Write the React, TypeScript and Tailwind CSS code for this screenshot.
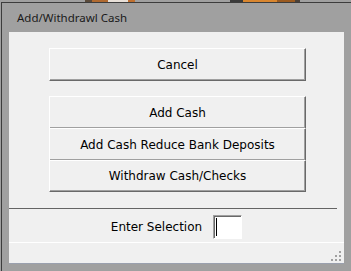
import React from 'react'

const strip = [
  { w: 85, c: '#a0a0a0' },
  { w: 7, c: '#5a4a3a' },
  { w: 16, c: '#b06a30' },
  { w: 20, c: '#e8e0d8' },
  { w: 7, c: '#c07030' },
  { w: 95, c: '#a0a0a0' },
  { w: 13, c: '#3a3a3a' },
  { w: 34, c: '#d9862f' },
  { w: 18, c: '#9a5a20' },
  { w: 5, c: '#4a4038' },
  { w: 51, c: '#a0a0a0' },
]

function OptionButton({ label, last }: { label: string; last?: boolean }) {
  return (
    <button
      className={`h-[32px] w-full bg-[#f0f0f0] border-t border-l border-white border-r border-r-[#696969] shadow-[inset_-1px_-1px_0_#a0a0a0] text-[12px] text-black ${
        last ? 'border-b border-b-[#696969]' : ''
      }`}
    >
      {label}
    </button>
  )
}

export default function App() {
  return (
    <div
      className="w-[351px] h-[271px] bg-[#a0a0a0] overflow-hidden flex flex-col"
      style={{ fontFamily: '"DejaVu Sans", sans-serif' }}
    >
      {/* desktop peeking through above the window */}
      <div className="flex h-[2px] shrink-0">
        {strip.map((s, i) => (
          <div key={i} style={{ width: s.w, background: s.c }} />
        ))}
      </div>

      <div className="flex-1 ml-[1px] border-l border-t border-[#3c3c3c] flex flex-col">
        {/* title bar */}
        <div
          className="h-[29px] pl-[15px] flex items-center text-[11.5px] text-[#1a1a1a]"
          style={{ fontFamily: '"Noto Sans", sans-serif' }}
        >
          Add/Withdrawl Cash
        </div>

        {/* client area */}
        <div className="ml-[7px] w-[335px] h-[232px] bg-[#f0f0f0] border-b border-[#9aa0ae] flex flex-col relative">
          <div className="pl-[40px] pt-[16px]">
            <button className="w-[257px] h-[33px] bg-[#f0f0f0] border-t border-l border-white border-r border-b border-r-[#696969] border-b-[#696969] shadow-[inset_-1px_-1px_0_#a0a0a0] text-[12px] text-black">
              Cancel
            </button>
          </div>

          <div className="pl-[40px] pt-[15px] flex flex-col w-[297px]">
            <OptionButton label="Add Cash" />
            <OptionButton label="Add Cash Reduce Bank Deposits" />
            <OptionButton label="Withdraw Cash/Checks" last />
          </div>

          <div className="mt-[16px] w-[328px] h-px bg-[#646464]" />

          <div className="h-[33px] pt-[6px] pb-[3px] flex items-center justify-center gap-[11px]">
            <span className="text-[12px] text-black">Enter Selection</span>
            <div className="w-[29px] h-[24px] bg-white border-t border-l border-[#a0a0a0] border-r border-b border-r-white border-b-white shadow-[inset_1px_1px_0_#696969] pl-[2px] pt-[2px]">
              <div className="w-px h-[18px] bg-black" />
            </div>
          </div>

          <div className="w-full h-px bg-white" />

          {/* size grip */}
          <div className="absolute right-[3px] bottom-[2px] grid grid-cols-3 gap-[2px]">
            <span className="w-[2px] h-[2px]" />
            <span className="w-[2px] h-[2px]" />
            <span className="w-[2px] h-[2px] bg-[#a0a0a0]" />
            <span className="w-[2px] h-[2px]" />
            <span className="w-[2px] h-[2px] bg-[#a0a0a0]" />
            <span className="w-[2px] h-[2px] bg-[#a0a0a0]" />
            <span className="w-[2px] h-[2px] bg-[#a0a0a0]" />
            <span className="w-[2px] h-[2px] bg-[#a0a0a0]" />
            <span className="w-[2px] h-[2px] bg-[#a0a0a0]" />
          </div>
        </div>
      </div>
    </div>
  )
}
